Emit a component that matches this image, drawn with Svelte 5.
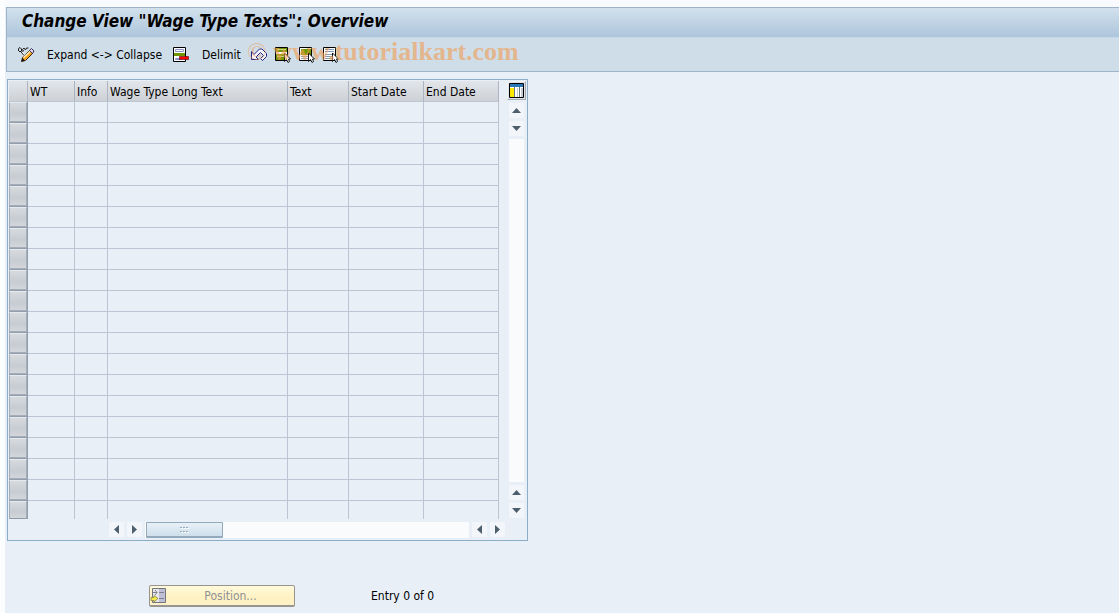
<script>
  const columns = [
    { label: 'WT', width: 47 },
    { label: 'Info', width: 33 },
    { label: 'Wage Type Long Text', width: 180 },
    { label: 'Text', width: 61 },
    { label: 'Start Date', width: 75 },
    { label: 'End Date', width: 75 },
  ];

  const rows = Array.from({ length: 20 }, (_, i) => i + 1);
</script>

{#snippet arrow(direction)}
  <button class="arrow" aria-label="Scroll {direction}">
    <svg width="9" height="9" viewBox="0 0 9 9" class={direction}>
      <path d="M0 7L4.500 2L9 7Z" fill="#4d5f6d" />
    </svg>
  </button>
{/snippet}

{#snippet pointer()}
  <path d="M9.500 6V14.500L11.500 12.500L13 15.500L14.500 14.500L13.500 12H15.500Z" fill="#fff" stroke="#000" stroke-width=".9" />
{/snippet}

<div class="page">
  <header>
    <h1>Change View "Wage Type Texts": Overview</h1>
    <div class="toolbar">
      <button class="edit" aria-label="Display or change">
        <svg width="18" height="17" viewBox="0 0 18 17">
          <path d="M1.500 5V2.500L3 1.500L4.500 3V5.500L6.500 5L5.500 3.500L7 2L8.500 4L9.500 2H11.500M2 5.500H4" fill="none" stroke="#222" />
          <path d="M4 6L7 9" stroke="#fff" stroke-width="2" />
          <path d="M3.500 5.500L7 9.500" stroke="#111" />
          <path d="M4.500 15.500L5.500 11.500L13 4L16 7L8.500 14.500Z" fill="#f9a51b" stroke="#3a2a10" />
          <path d="M6.500 11.500L13.500 5" stroke="#fff1c8" stroke-width="1.500" />
          <path d="M12.500 4.500L14.500 2.500L17 5L15.500 7.500Z" fill="#e8ddf0" stroke="#332b55" />
          <path d="M4.500 15.500L5.500 12L8 14.500Z" fill="#111" />
        </svg>
      </button>
      <button class="expand">Expand &lt;-&gt; Collapse</button>
      <button class="delete" aria-label="Delete">
        <svg width="17" height="16" viewBox="0 0 17 16">
          <path d="M.5 .5H12.500V14.500H.5Z" fill="#fff" stroke="#000" />
          <path d="M2.500 2.500H10.500V4.500H2.500ZM2.500 11.500H8.500V12.500H2.500Z" fill="#fff" stroke="#8e94c5" />
          <path d="M1 6H12V9H1Z" fill="#719600" />
          <path d="M6.500 9.500H15.500V12.500H6.500Z" fill="#f00" stroke="#500" stroke-width=".6" />
        </svg>
      </button>
      <button class="delimit">Delimit</button>
      <button class="undo" aria-label="Undo">
        <svg width="18" height="15" viewBox="0 0 18 15">
          <path d="M1.500 4.500V12.500H8.500L6 10L10.500 5.500L13.500 8.500L10.500 11.500L12.500 13.500L16.500 9.500V6.500L12 2H9.500L4 7.500Z" fill="#f4f7fc" stroke="#242486" />
        </svg>
      </button>
      <button class="select" aria-label="Select all">
        <svg width="16" height="16" viewBox="0 0 16 16">
          <path d="M.5 .5H12.500V13.500H.5Z" fill="#fff" stroke="#000" />
          <path d="M1 1H12V5H1ZM1 7H12V13H1Z" fill="#719600" />
          <path d="M2 2.500H11M2 9.500H9" stroke="#c8d687" />
          {@render pointer()}
        </svg>
      </button>
      <button class="select" aria-label="Select block">
        <svg width="16" height="16" viewBox="0 0 16 16">
          <path d="M.5 .5H12.500V13.500H.5Z" fill="#fff" stroke="#000" />
          <path d="M2 2H12V8H2Z" fill="#719600" />
          <path d="M2 9.500H9M2 11.500H9" stroke="#8da5b8" />
          {@render pointer()}
        </svg>
      </button>
      <button class="select" aria-label="Deselect all">
        <svg width="16" height="16" viewBox="0 0 16 16">
          <path d="M.5 .5H12.500V13.500H.5Z" fill="#fff" stroke="#000" />
          <path d="M2 2.500H11M2 4.500H11M2 7.500H9M2 9.500H9M2 11.500H9" stroke="#7f9bb4" />
          {@render pointer()}
        </svg>
      </button>
      <span class="watermark"><span class="copyright">©</span> www.tutorialkart.com</span>
    </div>
  </header>

  <main>
    <section class="panel">
      <div class="grid">
        <table>
          <colgroup>
            <col style="width: 19px" />
            {#each columns as column}
              <col style="width: {column.width}px" />
            {/each}
          </colgroup>
          <thead>
            <tr>
              <th></th>
              {#each columns as column}
                <th scope="col">{column.label}</th>
              {/each}
            </tr>
          </thead>
          <tbody>
            {#each rows as row}
              <tr>
                <td class="selector"><button aria-label="Select row {row}"></button></td>
                {#each columns as column}
                  <td></td>
                {/each}
              </tr>
            {/each}
          </tbody>
        </table>

        <div class="vertical">
          <button class="configure" aria-label="Table settings">
            <svg width="15" height="15" viewBox="0 0 15 15">
              <path d="M.5 .5H14.500V14.500H.5Z" fill="#fff" stroke="#000" />
              <path d="M1 1H14V4H1Z" fill="#2878b8" />
              <path d="M1 5H5V14H1Z" fill="#ffe800" />
              <path d="M8 5H9V14H8ZM12 5H14V14H12Z" fill="#c6cbd2" />
              <path d="M5.500 4V14M10.500 4V14" stroke="#6c7780" />
            </svg>
          </button>
          {@render arrow('up')}
          {@render arrow('down')}
          <div class="track"></div>
          {@render arrow('up')}
          {@render arrow('down')}
        </div>
      </div>

      <div class="horizontal">
        {@render arrow('left')}
        {@render arrow('right')}
        <div class="track">
          <button class="thumb" aria-label="Scroll columns">
            <svg width="9" height="7" viewBox="0 0 9 7">
              <path d="M0 1.500H2M3 1.500H5M6 1.500H8M0 5.500H2M3 5.500H5M6 5.500H8" stroke="#98a9b8" />
              <path d="M1 2.500H3M4 2.500H6M7 2.500H9M1 6.500H3M4 6.500H6M7 6.500H9" stroke="#fff" />
            </svg>
          </button>
        </div>
        {@render arrow('left')}
        {@render arrow('right')}
      </div>
    </section>

    <footer>
      <button class="position" disabled>
        <svg width="17" height="17" viewBox="0 0 17 17">
          <path d="M2.500 1.500H15.500V15.500H2.500Z" fill="#e6e8ee" stroke="#74747c" />
          <path d="M9 2H15V15H9Z" fill="#bfc0d6" />
          <path d="M3 5.500H7M5 3L7 5.500L5 8M9 5.500H14M9 11.500H14" fill="none" stroke="#80808c" />
          <path d="M1 10.500H4V8.500L8 11.500L4 15V13.500H1Z" fill="#f6ea4c" stroke="#8c8640" stroke-width=".8" />
        </svg>
        <span>Position...</span>
      </button>
      <span>Entry 0 of 0</span>
    </footer>
  </main>
</div>

<style>
  :global(body) {
    margin: 0;
  }

  .page {
    box-sizing: border-box;
    min-height: 100vh;
    padding-top: 7px;
    border-left: 5px solid #fcfdfe;
    background: linear-gradient(#f8fafd 7px, #e8eff6 7px);
    color: #000;
    font-family: Tahoma, 'DejaVu Sans Condensed', 'DejaVu Sans', sans-serif;
    font-size: 12px;
  }

  button {
    margin: 0;
    padding: 0;
    border: 0;
    background: none;
    color: inherit;
    font: inherit;
  }

  svg {
    display: block;
    flex: none;
  }

  header {
    margin-left: 1px;
    border: 1px solid #9fb4c8;
    border-right: 0;
  }

  h1 {
    margin: 0;
    padding: 0 0 2px 15px;
    border-bottom: 1px solid #c6d7e5;
    background: linear-gradient(#d2e1ed, #bfd3e4 50%, #adc5dc);
    font-size: 17px;
    font-style: oblique;
    font-weight: bold;
    line-height: 27px;
  }

  .toolbar {
    position: relative;
    display: flex;
    align-items: center;
    height: 33px;
    padding-left: 10px;
    background: #cfdde8;
    white-space: nowrap;
  }

  .edit {
    margin-right: 12px;
  }

  .expand {
    width: 113px;
    margin-right: 13px;
  }

  .delete {
    margin-right: 12px;
  }

  .delimit {
    width: 37px;
    margin-right: 11px;
  }

  .undo {
    margin-right: 7px;
  }

  .select {
    margin-right: 8px;
  }

  .watermark {
    position: absolute;
    left: 240px;
    top: 0;
    color: rgb(240 160 88 / 65%);
    font: bold 26px/28px 'Liberation Serif', serif;
    pointer-events: none;
  }

  .copyright {
    font-weight: normal;
    opacity: 0.8;
  }

  main {
    padding: 7px 0 0 2px;
  }

  .panel {
    width: fit-content;
    padding: 1px 1px 2px 1px;
    border: 1px solid #8badc8;
  }

  .grid {
    display: flex;
    gap: 8px;
  }

  table {
    width: 490px;
    border-spacing: 0;
    table-layout: fixed;
  }

  th {
    box-sizing: border-box;
    height: 21px;
    padding: 2px 0 0 2px;
    border-right: 1px solid #abb4c0;
    border-bottom: 1px solid #bcc5d2;
    background: linear-gradient(#e2e6ea, #cdd1d6);
    font-weight: normal;
    text-align: left;
    white-space: nowrap;
  }

  td {
    box-sizing: border-box;
    height: 21px;
    padding: 0;
    border-right: 1px solid #bcc5d4;
    border-bottom: 1px solid #bcc5d4;
  }

  tr:last-child td {
    height: 18px;
    border-bottom: 0;
  }

  .selector {
    border-color: #929dad;
  }

  .selector button {
    display: block;
    box-sizing: border-box;
    width: 100%;
    height: 20px;
    border: 1px solid #a5adb9;
    border-top-color: #e6eaef;
    background: linear-gradient(#d6dade, #c7ccd2 60%, #d3d7dc);
  }

  tr:last-child .selector button {
    height: 18px;
    border-bottom-color: #8f99a8;
  }

  .vertical {
    display: flex;
    flex-direction: column;
    align-items: center;
    gap: 3px;
    padding-bottom: 1px;
  }

  .configure {
    padding: 1px;
    border: 1px solid #f1f4f7;
    border-right-color: #a3abb3;
    border-bottom-color: #a3abb3;
    background: #dce2e8;
  }

  .arrow {
    display: flex;
    align-items: center;
    justify-content: center;
    flex: none;
    width: 15px;
    height: 15px;
    background: #f2f6fb;
  }

  .down {
    transform: rotate(180deg);
  }

  .left {
    transform: rotate(-90deg);
  }

  .right {
    transform: rotate(90deg);
  }

  .track {
    flex: 1;
    background: #fafbfc;
  }

  .vertical .track {
    width: 15px;
  }

  .horizontal {
    display: flex;
    gap: 3px;
    margin: 3px 21px 0 100px;
  }

  .horizontal .track {
    padding-left: 1px;
  }

  .thumb {
    display: flex;
    align-items: center;
    justify-content: center;
    box-sizing: border-box;
    width: 77px;
    height: 16px;
    border: 1px solid #94a9bb;
    border-bottom-width: 2px;
    border-radius: 1px;
    background: linear-gradient(#e7f0f7, #cfdfeb);
  }

  footer {
    display: flex;
    align-items: center;
    gap: 76px;
    padding: 44px 0 6px 142px;
    line-height: 16px;
  }

  .position {
    display: flex;
    align-items: center;
    box-sizing: border-box;
    width: 146px;
    height: 22px;
    border: 1px solid #99958e;
    border-bottom-width: 2px;
    border-radius: 2px;
    background: linear-gradient(#fffadd, #fff2c2 60%, #fdf2c8);
    color: #8f9196;
  }

  .position span {
    flex: 1;
    text-align: center;
  }
</style>
